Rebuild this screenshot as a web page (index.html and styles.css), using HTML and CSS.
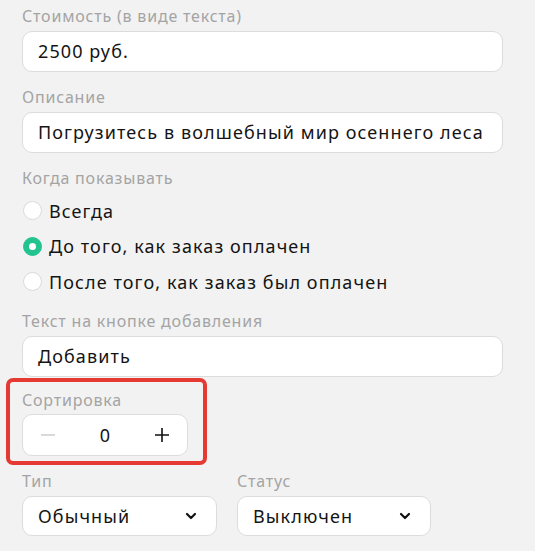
FILE: index.html
```html
<!DOCTYPE html>
<html lang="ru">
<head>
<meta charset="utf-8">
<link rel="stylesheet" href="styles.css">
</head>
<body>
<form class="form">
  <div class="field">
    <label class="label">Стоимость (в виде текста)</label>
    <div class="input">2500 руб.</div>
  </div>
  <div class="field">
    <label class="label">Описание</label>
    <div class="input">Погрузитесь в волшебный мир осеннего леса</div>
  </div>
  <div class="field">
    <label class="label">Когда показывать</label>
    <div class="radios">
      <div class="radio"><span class="dot"></span><span>Всегда</span></div>
      <div class="radio checked"><span class="dot"></span><span>До того, как заказ оплачен</span></div>
      <div class="radio"><span class="dot"></span><span>После того, как заказ был оплачен</span></div>
    </div>
  </div>
  <div class="field">
    <label class="label">Текст на кнопке добавления</label>
    <div class="input">Добавить</div>
  </div>
  <div class="field highlighted">
    <label class="label">Сортировка</label>
    <div class="stepper">
      <span class="step-btn minus"><svg width="16" height="16" viewBox="0 0 16 16"><path d="M1 8h14" stroke="#d0d0d0" stroke-width="1.6" fill="none"/></svg></span>
      <span class="step-value">0</span>
      <span class="step-btn plus"><svg width="16" height="16" viewBox="0 0 16 16"><path d="M1 8h14M8 1v14" stroke="#111" stroke-width="1.6" fill="none"/></svg></span>
    </div>
  </div>
  <div class="row">
    <div class="field col">
      <label class="label">Тип</label>
      <div class="select"><span>Обычный</span><svg width="12" height="8" viewBox="0 0 12 8"><path d="M2 2l4 4 4-4" stroke="#111" stroke-width="2.2" fill="none" stroke-linecap="round" stroke-linejoin="round"/></svg></div>
    </div>
    <div class="field col">
      <label class="label">Статус</label>
      <div class="select"><span>Выключен</span><svg width="12" height="8" viewBox="0 0 12 8"><path d="M2 2l4 4 4-4" stroke="#111" stroke-width="2.2" fill="none" stroke-linecap="round" stroke-linejoin="round"/></svg></div>
    </div>
  </div>
</form>
</body>
</html>
```

FILE: styles.css
```css
html, body {
  margin: 0;
  padding: 0;
  background: #f2f2f2;
}
body {
  font-family: "Noto Sans", "DejaVu Sans", sans-serif;
  color: #141414;
}
.form {
  width: 481px;
  padding: 6px 0 0 22px;
  display: flex;
  flex-direction: column;
  gap: 15px;
}
.field {
  display: flex;
  flex-direction: column;
  gap: 5px;
}
.label {
  font-size: 16px;
  line-height: 20px;
  letter-spacing: 0.8px;
  color: #a4a4a4;
}
.input {
  box-sizing: border-box;
  height: 41px;
  background: #fff;
  border: 1px solid #dcdcdc;
  border-radius: 10px;
  padding: 0 14px 0 15px;
  font-size: 18px;
  line-height: 39px;
  letter-spacing: 1.1px;
  white-space: nowrap;
  overflow: hidden;
}
.radios {
  display: flex;
  flex-direction: column;
  margin-bottom: -4px;
}
.radio {
  display: flex;
  align-items: center;
  gap: 7px;
  height: 35.5px;
  font-size: 18px;
  letter-spacing: 1.1px;
}
.dot {
  box-sizing: border-box;
  width: 19px;
  height: 19px;
  margin-left: 1px;
  border-radius: 50%;
  background: #fff;
  border: 1px solid #dadada;
  display: flex;
  align-items: center;
  justify-content: center;
}
.radio.checked .dot {
  background: #22c38e;
  border-color: #22c38e;
}
.radio.checked .dot::after {
  content: "";
  width: 7px;
  height: 7px;
  border-radius: 50%;
  background: #fff;
}
.highlighted {
  position: relative;
  width: 166px;
  margin-top: -2px;
  gap: 4px;
}
.highlighted::after {
  content: "";
  position: absolute;
  left: -16px;
  top: -12px;
  right: -19px;
  bottom: -9px;
  border: 4px solid #e53a33;
  border-radius: 7px;
  pointer-events: none;
}
.stepper {
  box-sizing: border-box;
  height: 42px;
  width: 166px;
  background: #fff;
  border: 1px solid #dcdcdc;
  border-radius: 10px;
  display: flex;
  align-items: center;
}
.step-btn {
  width: 50px;
  display: flex;
  justify-content: center;
  align-items: center;
}
.step-value {
  flex: 1;
  text-align: center;
  font-size: 18px;
}
.row {
  display: flex;
  gap: 20px;
}
.col {
  width: 195px;
}
.col + .col {
  width: 194px;
}
.select {
  box-sizing: border-box;
  height: 40px;
  background: #fff;
  border: 1px solid #dcdcdc;
  border-radius: 10px;
  padding: 0 19px 0 15px;
  font-size: 18px;
  letter-spacing: 1.1px;
  display: flex;
  align-items: center;
  justify-content: space-between;
}
```
